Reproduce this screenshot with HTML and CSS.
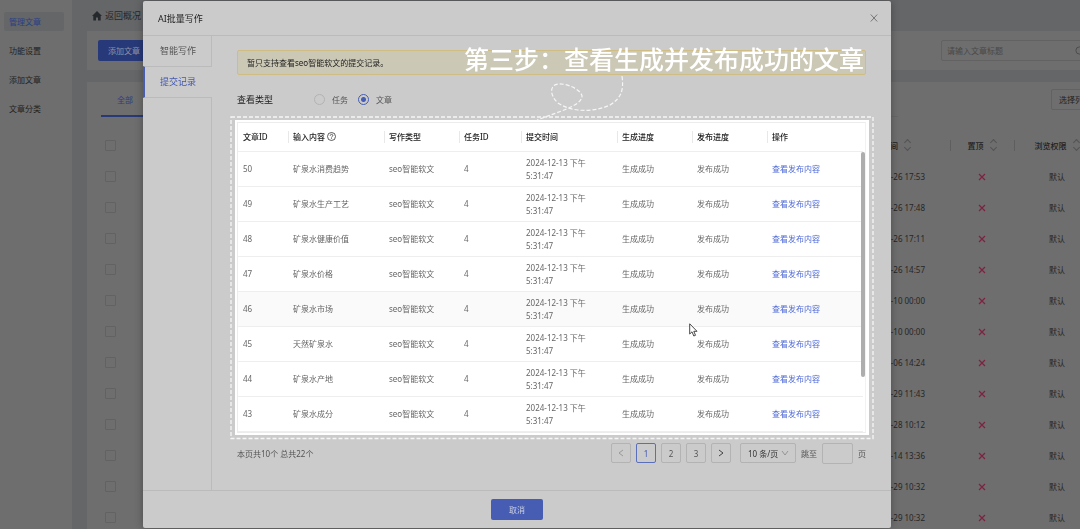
FILE: index.html
```html
<!DOCTYPE html>
<html lang="zh-CN">

<head>
    <meta charset="UTF-8" />
    <meta name="viewport" content="width=device-width, initial-scale=1.0" />
    <title>AI批量写作</title>
    <link rel="stylesheet" href="styles.css">
</head>

<body>

    <!-- 后台页面 -->
    <div class="page">
        <nav class="sidebar">
            <a class="side-link active" href="#">管理文章</a>
            <a class="side-link" href="#">功能设置</a>
            <a class="side-link" href="#">添加文章</a>
            <a class="side-link" href="#">文章分类</a>
        </nav>

        <main class="main">
            <a class="back" href="#">
                <svg width="10" height="10" viewBox="0 0 10 10"><path d="M5 0 L10 5 H8.7 V9.5 H6 V6.5 H4 V9.5 H1.3 V5 H0 Z" fill="#25292d" /></svg>
                返回概况
            </a>

            <div class="card toolbar">
                <button class="btn-add" type="button">添加文章</button>
                <div class="search">
                    <input type="text" placeholder="请输入文章标题" aria-label="文章标题">
                    <svg width="10" height="10" viewBox="0 0 10 10"><circle cx="4.5" cy="4.5" r="3.6" fill="none" stroke="#4d4d4d" /><path d="M7.2 7.2 L9.6 9.6" stroke="#4d4d4d" /></svg>
                </div>
            </div>

            <div class="card list">
                <div class="list-top">
                    <div class="list-tabs"><a class="list-tab" href="#">全部</a></div>
                    <button class="btn-cols" type="button">选择列</button>
                </div>
                <table class="list-table">
                    <colgroup>
                        <col class="l-check">
                        <col>
                        <col class="l-time">
                        <col class="l-top">
                        <col class="l-auth">
                    </colgroup>
                    <thead>
                        <tr>
                            <th><input type="checkbox" aria-label="全选"></th>
                            <th></th>
                            <th class="time">时间<i class="sorter"></i></th>
                            <th class="sep">置顶<i class="sorter"></i></th>
                            <th class="sep">浏览权限<i class="sorter"></i></th>
                        </tr>
                    </thead>
                    <tbody id="listBody"></tbody>
                </table>
            </div>
        </main>
    </div>

    <!-- 弹窗 -->
    <div class="mask">
        <div class="modal" role="dialog" aria-labelledby="modalTitle">
            <header class="modal-head">
                <h2 id="modalTitle">AI批量写作</h2>
                <button class="close" type="button" aria-label="关闭">
                    <svg width="8" height="8" viewBox="0 0 8 8"><path d="M0.8 0.5 L7.2 7.5 M7.2 0.5 L0.8 7.5" stroke="#777" fill="none" /></svg>
                </button>
            </header>

            <div class="modal-body">
                <nav class="modal-tabs">
                    <a class="modal-tab" href="#">智能写作</a>
                    <a class="modal-tab active" href="#">提交记录</a>
                </nav>

                <section class="record">
                    <p class="alert">暂只支持查看seo智能软文的提交记录。</p>

                    <div class="filter">
                        <span class="filter-name">查看类型</span>
                        <label><input type="radio" name="type">任务</label>
                        <label><input type="radio" name="type" checked>文章</label>
                    </div>

                    <div class="focus">
                        <svg class="focus-line"><rect x="1" y="1" /></svg>
                        <div class="table-wrap">
                            <table class="data">
                                <colgroup>
                                    <col class="c-id">
                                    <col class="c-text">
                                    <col class="c-state">
                                    <col class="c-task">
                                    <col class="c-text">
                                    <col class="c-state">
                                    <col class="c-state">
                                    <col class="c-text">
                                </colgroup>
                                <thead>
                                    <tr>
                                        <th>文章ID</th>
                                        <th>输入内容
                                            <svg class="help" width="9" height="9" viewBox="0 0 9 9"><circle cx="4.5" cy="4.5" r="4" fill="none" stroke="#333" stroke-width="0.8" /><path d="M3.2 3.7 C3.2 1.8 5.9 1.9 5.8 3.6 C5.7 4.5 4.5 4.4 4.5 5.6 M4.5 6.3 V7.1" fill="none" stroke="#333" stroke-width="0.8" /></svg>
                                        </th>
                                        <th>写作类型</th>
                                        <th>任务ID</th>
                                        <th>提交时间</th>
                                        <th>生成进度</th>
                                        <th>发布进度</th>
                                        <th>操作</th>
                                    </tr>
                                </thead>
                                <tbody id="dataBody"></tbody>
                            </table>
                            <div class="scroll-thumb"></div>
                        </div>
                    </div>

                    <div class="pager">
                        <span class="total">本页共10个 总共22个</span>
                        <button class="page-btn prev" type="button" aria-label="上一页">
                            <svg width="6" height="8" viewBox="0 0 6 8"><path d="M5 1 L1 4 L5 7" fill="none" stroke="#999" /></svg>
                        </button>
                        <button class="page-btn current" type="button">1</button>
                        <button class="page-btn" type="button">2</button>
                        <button class="page-btn" type="button">3</button>
                        <button class="page-btn" type="button" aria-label="下一页">
                            <svg width="6" height="8" viewBox="0 0 6 8"><path d="M1 1 L5 4 L1 7" fill="none" stroke="#444" /></svg>
                        </button>
                        <span class="size">
                            <select aria-label="每页条数"><option>10 条/页</option></select>
                            <svg width="8" height="6" viewBox="0 0 8 6"><path d="M1 1 L4 5 L7 1" fill="none" stroke="#888" stroke-width="0.8" /></svg>
                        </span>
                        <label class="jump">跳至<input type="text">页</label>
                    </div>
                </section>
            </div>

            <footer class="modal-foot">
                <button class="btn-cancel" type="button">取消</button>
            </footer>

            <!-- 步骤说明 -->
            <div class="step">
                <p>第三步：查看生成并发布成功的文章</p>
                <svg width="90" height="46" viewBox="0 0 90 46"><path d="M87 1 C89 16 86 23 75 30 C58 38 36 37 23 28 C15 21 14 10 23 9 C33 8 48 16 47 22 C45 31 26 36 2 45" /></svg>
            </div>

            <svg class="cursor" width="9" height="14" viewBox="0 0 9 14"><path d="M0.7 0.8 V11 L3 8.8 L4.8 13 L6.5 12.3 L4.8 8.3 H8 Z" fill="#fff" stroke="#333" stroke-width="0.9" /></svg>
        </div>
    </div>

    <script>
        // 弹窗里的提交记录
        const records = [
            [50, "矿泉水消费趋势"],
            [49, "矿泉水生产工艺"],
            [48, "矿泉水健康价值"],
            [47, "矿泉水价格"],
            [46, "矿泉水市场"],
            [45, "天然矿泉水"],
            [44, "矿泉水产地"],
            [43, "矿泉水成分"]
        ];
        document.getElementById("dataBody").innerHTML = records.map(([id, text]) => `
            <tr class="${id === 46 ? "hover" : ""}">
                <td>${id}</td>
                <td>${text}</td>
                <td>seo智能软文</td>
                <td>4</td>
                <td>2024-12-13 下午 5:31:47</td>
                <td>生成成功</td>
                <td>发布成功</td>
                <td><a href="#">查看发布内容</a></td>
            </tr>`).join("");

        // 后台文章列表
        const times = ["11-26 17:53", "11-26 17:48", "11-26 17:11", "11-26 14:57", "11-10 00:00", "11-10 00:00",
            "11-06 14:24", "10-29 11:43", "10-28 10:12", "10-14 13:36", "09-29 10:32", "09-29 10:32"];
        document.getElementById("listBody").innerHTML = times.map(time => `
            <tr>
                <td><input type="checkbox" aria-label="选择"></td>
                <td></td>
                <td class="time">${time}</td>
                <td><svg width="8" height="8" viewBox="0 0 8 8"><path d="M1 1 L7 7 M7 1 L1 7" stroke="#7d2340" stroke-width="1.2" /></svg></td>
                <td>默认</td>
            </tr>`).join("");
    </script>
</body>

</html>
```
FILE: styles.css
```css
* {
    box-sizing: border-box;
}

body {
    margin: 0;
    height: 100vh;
    overflow: hidden;
    background-color: #646668;
    font-family: "Noto Sans", "Noto Sans CJK SC", sans-serif;
    font-size: 8px;
    line-height: 13px;
    color: #222;
}

h2,
p {
    margin: 0;
    font-weight: normal;
}

a {
    color: inherit;
    text-decoration: none;
}

button,
input,
select {
    margin: 0;
    padding: 0;
    font: inherit;
    color: inherit;
    border: 1px solid #b3b3b3;
    border-radius: 2px;
    background: none;
}

svg {
    flex: none;
}

/* 后台页面 */
.page {
    display: flex;
    width: calc(100% + 30px);
    min-height: 100vh;
}

.sidebar {
    display: flex;
    flex-direction: column;
    gap: 10px;
    width: 72px;
    padding: 12px 8px 0 4px;
    background-color: #6e6e6e;
}

.side-link {
    padding: 3px 5px;
    border-radius: 2px;
}

.side-link.active {
    color: #2a3f85;
    background-color: #646668;
}

.main {
    flex: 1;
    display: flex;
    flex-direction: column;
    padding-left: 15px;
}

.back {
    display: flex;
    align-items: center;
    gap: 3px;
    height: 31px;
    padding-left: 5px;
    font-size: 9px;
    color: #25292d;
}

.card {
    background-color: #6e6e6e;
}

.toolbar {
    display: flex;
    align-items: center;
    justify-content: space-between;
    height: 39px;
    margin-bottom: 12px;
    padding: 0 14px 0 11px;
}

.btn-add {
    width: 52px;
    height: 21px;
    border: 0;
    color: #8e94ab;
    background-color: #273978;
}

.search {
    display: flex;
    align-items: center;
    width: 155px;
    height: 21px;
    padding: 0 10px 0 5px;
    border: 1px solid #626262;
    border-radius: 2px;
}

.search input {
    flex: 1;
    min-width: 0;
    border: 0;
}

.search input::placeholder {
    color: #484848;
}

.list {
    flex: 1;
    padding: 0 10px 0 14px;
}

.list-top {
    display: flex;
    justify-content: space-between;
    height: 48px;
}

.list-tabs {
    width: 797px;
    height: 35px;
    border-bottom: 1px solid #676767;
}

.list-tab {
    display: block;
    width: 48px;
    height: 35px;
    padding-top: 11px;
    text-align: center;
    color: #2a3f85;
    border-bottom: 2px solid #273978;
}

.btn-cols {
    width: 49px;
    height: 21px;
    margin-top: 7px;
    padding-left: 7px;
    text-align: left;
    border-color: #626262;
}

.list-table {
    width: 100%;
    table-layout: fixed;
    border-collapse: collapse;
    text-align: center;
}

.list-table th,
.list-table td {
    position: relative;
    height: 31px;
    padding: 0;
}

.list-table th {
    font-weight: 500;
}

.list-table td {
    color: #262626;
}

.list-table .time {
    padding-right: 25px;
    text-align: right;
}

.list-table th.time {
    padding-right: 39px;
}

.list-table .sep::before {
    content: "";
    position: absolute;
    left: 0;
    top: 10px;
    height: 11px;
    border-left: 1px solid #5e5e5e;
}

.list-table input {
    appearance: none;
    display: block;
    width: 11px;
    height: 11px;
    margin-left: 4px;
    border: 1px solid #626262;
    border-radius: 1px;
}

.list-table td svg {
    display: block;
    margin: 0 auto;
}

.l-check {
    width: 40px;
}

.l-time {
    width: 118px;
}

.l-top {
    width: 64px;
}

.l-auth {
    width: 86px;
}

/* 排序箭头 */
.sorter {
    display: inline-flex;
    flex-direction: column;
    gap: 2px;
    margin: 0 1px 2px 7px;
    vertical-align: middle;
}

.sorter::before,
.sorter::after {
    content: "";
    width: 4px;
    height: 4px;
    border: solid #545454;
    border-width: 1px 0 0 1px;
    transform: rotate(45deg);
}

.sorter::after {
    border-width: 0 1px 1px 0;
    margin-top: -2px;
}

/* 弹窗 */
.mask {
    position: fixed;
    inset: 0;
    padding: 1px 189px 1px 143px;
}

.modal {
    position: relative;
    border-radius: 2px;
    background-color: #cbcbcb;
    box-shadow: 0 0 8px rgba(0, 0, 0, 0.3);
}

.modal-head {
    display: flex;
    align-items: center;
    justify-content: space-between;
    height: 35px;
    padding: 0 13px 0 15px;
    border-bottom: 1px solid #bbb;
}

.modal-head h2 {
    font-size: 9px;
}

.close {
    display: flex;
    border: 0;
}

.modal-body {
    display: flex;
}

.modal-tabs {
    flex: none;
    display: flex;
    flex-direction: column;
    width: 69px;
}

/* 右侧竖线 */
.modal-tabs::after {
    content: "";
    flex: 1;
    border-right: 1px solid #bbb;
}

.modal-tab {
    height: 30px;
    padding: 8px 0 0 17px;
    font-size: 9px;
    color: #555;
    border-right: 1px solid #bbb;
}

.modal-tab.active {
    height: 32px;
    padding-left: 15px;
    color: #4358b0;
    border: solid #bbb;
    border-width: 1px 0;
    border-left: 2px solid #465db3;
}

.record {
    flex: 1;
    min-width: 0;
    padding: 14px 25px 26px;
}

.alert {
    height: 25px;
    padding: 5px 9px;
    border: 1px solid #d0bd84;
    border-radius: 2px;
    background-color: #cbc8b6;
}

.filter {
    display: flex;
    align-items: center;
    height: 45px;
    padding-top: 4px;
}

.filter-name {
    width: 77px;
    font-size: 9px;
}

.filter label {
    display: flex;
    align-items: center;
    gap: 7px;
    margin-right: 10px;
    color: #555;
}

.filter input {
    appearance: none;
    width: 11px;
    height: 11px;
    border-radius: 50%;
}

.filter input:checked {
    border-color: #465db3;
    background: radial-gradient(circle, #465db3 2px, transparent 3px);
}

.focus {
    position: relative;
    margin: 0 -3px 0 -2px;
    padding: 2px 3px 2px 2px;
    background-color: #fff;
}

/* 白色虚线框 */
.focus-line {
    position: absolute;
    left: -5px;
    top: -4px;
    width: calc(100% + 10px);
    height: calc(100% + 9px);
}

.focus-line rect {
    width: calc(100% - 2px);
    height: calc(100% - 2px);
    fill: none;
    stroke: #f6f6f6;
    stroke-width: 1.3px;
    stroke-dasharray: 4 2;
}

.table-wrap {
    position: relative;
    padding-right: 4px;
    border: 1px solid #ececec;
    border-right-color: #f2f2f2;
}

.data {
    width: 100%;
    table-layout: fixed;
    border-collapse: collapse;
    text-align: left;
}

.data th,
.data td {
    position: relative;
    height: 35px;
    padding: 4px 5px;
    border-bottom: 1px solid #eee;
}

.data th {
    height: 28px;
    font-weight: 500;
    white-space: nowrap;
}

.data th + th::before {
    content: "";
    position: absolute;
    left: 0;
    top: 8px;
    height: 12px;
    border-left: 1px solid #e8e8e8;
}

.data td {
    color: #666;
}

.data td:nth-child(5) {
    padding-right: 20px;
}

.data a {
    color: #4d68d6;
}

.data .hover {
    background-color: #fafafa;
}

.help {
    margin-bottom: 2px;
    vertical-align: middle;
}

.c-id {
    width: 50px;
}

.c-text {
    width: 96px;
}

.c-state {
    width: 75px;
}

.c-task {
    width: 62px;
}

.scroll-thumb {
    position: absolute;
    top: 29px;
    right: 0;
    width: 4px;
    height: 73%;
    border-radius: 2px;
    background-color: #adadad;
}

/* 分页 */
.pager {
    display: flex;
    align-items: center;
    gap: 5px;
    margin-top: 8px;
    color: #555;
}

.total {
    flex: 1;
    white-space: nowrap;
}

.page-btn {
    display: flex;
    align-items: center;
    justify-content: center;
    width: 20px;
    height: 20px;
}

.page-btn.current {
    color: #4358b0;
    border-color: #5a6fbc;
}

.size {
    position: relative;
    margin-left: 4px;
    color: #333;
}

.size select {
    appearance: none;
    display: block;
    width: 56px;
    height: 20px;
    padding-left: 7px;
}

.size svg {
    position: absolute;
    right: 7px;
    top: 7px;
}

.jump {
    display: flex;
    align-items: center;
    gap: 5px;
}

.jump input {
    width: 31px;
    height: 21px;
}

.modal-foot {
    display: flex;
    justify-content: center;
    padding: 8px 0;
    border-top: 1px solid #bbb;
}

.btn-cancel {
    width: 52px;
    height: 21px;
    border: 0;
    color: #ccd0e0;
    background-color: #465db3;
}

/* 步骤说明 */
.step {
    position: absolute;
    top: 40px;
    right: 27px;
}

.step p {
    font-size: 25px;
    font-weight: 500;
    line-height: 36px;
    color: #fff;
}

.step svg {
    display: block;
    margin: -2px 0 0 71px;
}

.step path {
    fill: none;
    stroke: #f6f6f6;
    stroke-width: 1.2;
    stroke-dasharray: 4 2;
}

.cursor {
    position: absolute;
    left: 546px;
    top: 322px;
}
```
